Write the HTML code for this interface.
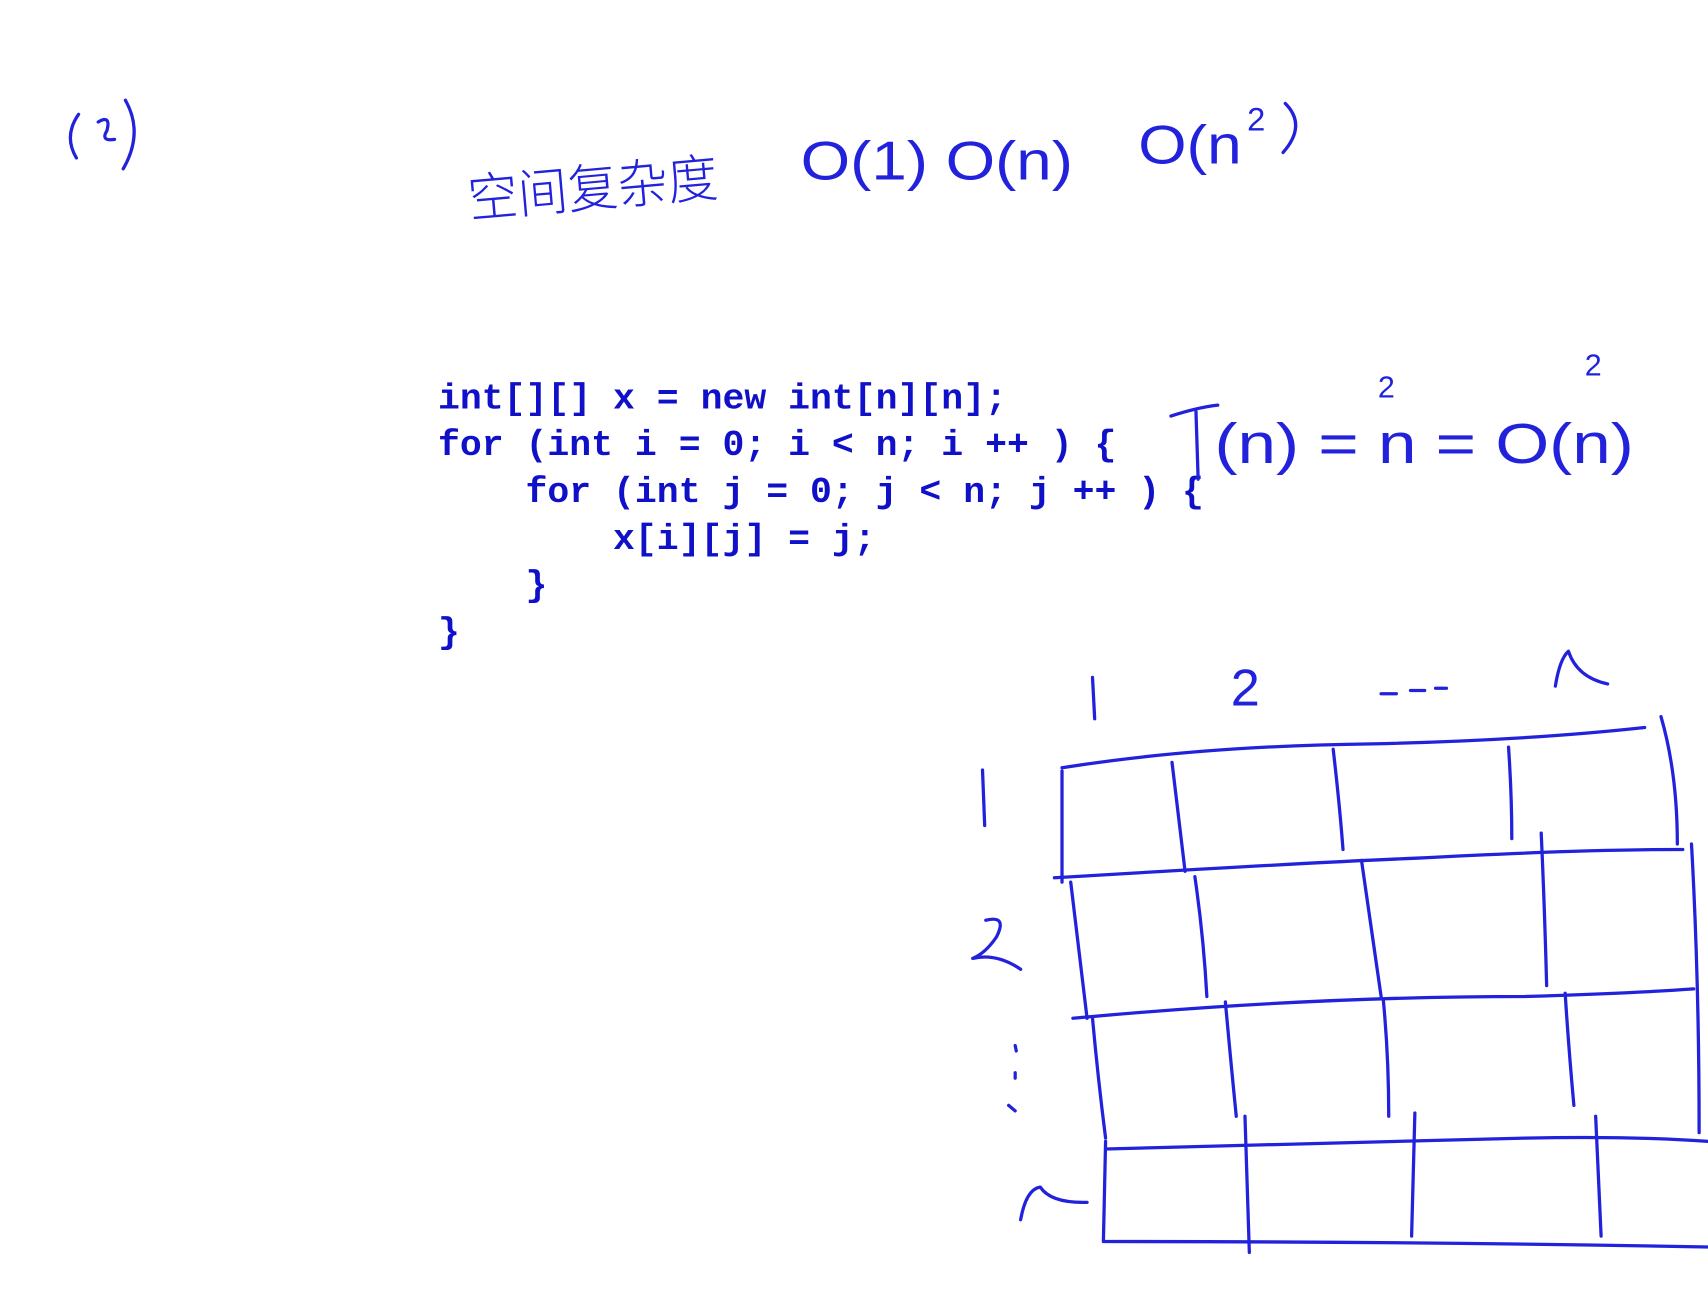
<!DOCTYPE html>
<html><head><meta charset="utf-8"><style>
html,body{margin:0;padding:0;background:#fff;}
svg{display:block;}
.c{font-family:"Liberation Mono","DejaVu Sans Mono",monospace;font-weight:bold;font-size:33.5px;fill:#1010c8;white-space:pre;}
.h{fill:none;stroke:#2222dd;stroke-width:3;stroke-linecap:round;stroke-linejoin:round;}
.t{font-family:"Liberation Sans","Noto Sans CJK SC",sans-serif;fill:#2222dd;}
</style></head><body>
<svg width="1708" height="1296" viewBox="0 0 1568 1190" xmlns="http://www.w3.org/2000/svg">
<rect width="1568" height="1190" fill="#fff"/>
<text class="c" x="402" y="375" xml:space="preserve">int[][] x = new int[n][n];</text>
<text class="c" x="402" y="418" xml:space="preserve">for (int i = 0; i &lt; n; i ++ ) {</text>
<text class="c" x="402" y="461" xml:space="preserve">    for (int j = 0; j &lt; n; j ++ ) {</text>
<text class="c" x="402" y="504" xml:space="preserve">        x[i][j] = j;</text>
<text class="c" x="402" y="547" xml:space="preserve">    }</text>
<text class="c" x="402" y="590" xml:space="preserve">}</text>

<!-- (2) -->
<path class="h" d="M72 105 Q58 125 70 145"/>
<path class="h" d="M90 112 Q102 105 98 120 Q92 130 105 128"/>
<path class="h" d="M115 92 Q132 122 113 155"/>

<!-- chinese heading -->
<text class="t" x="428" y="190" font-size="48" transform="rotate(-5 540 160)" textLength="230" lengthAdjust="spacingAndGlyphs" style="font-family:'Noto Sans CJK SC',sans-serif;font-weight:300">空间复杂度</text>

<!-- O(1) O(n) O(n^2) -->
<text class="t" x="735" y="165" font-size="50" font-weight="300" textLength="250" lengthAdjust="spacingAndGlyphs">O(1) O(n)</text>
<text class="t" x="1045" y="150" font-size="50" font-weight="300" textLength="95" lengthAdjust="spacingAndGlyphs">O(n</text>
<text class="t" x="1145" y="120" font-size="30" font-weight="300">2</text>
<path class="h" d="M1180 95 Q1200 115 1178 140"/>

<!-- T(n) = n^2 = O(n^2) -->
<path class="h" d="M1075 382 Q1100 374 1118 372"/>
<path class="h" d="M1098 378 L1100 440"/>
<text class="t" x="1115" y="425" font-size="52" font-weight="300" textLength="385" lengthAdjust="spacingAndGlyphs">(n) = n = O(n)</text>
<text class="t" x="1265" y="365" font-size="28" font-weight="300">2</text>
<text class="t" x="1455" y="345" font-size="28" font-weight="300">2</text>

<!-- column labels -->
<path class="h" d="M1003 622 L1005 660"/>
<text class="t" x="1130" y="648" font-size="48" font-weight="300">2</text>
<path class="h" d="M1268 637 L1282 637 M1295 634 L1308 634 M1318 632 L1328 632"/>
<path class="h" d="M1428 630 Q1432 605 1440 598 Q1448 622 1476 628"/>

<!-- row labels -->
<path class="h" d="M902 707 L904 758"/>
<path class="h" d="M905 845 Q925 840 915 860 Q905 875 893 880 Q915 875 937 890"/>
<path class="h" d="M932 960 L933 965 M932 985 L932 990 M926 1015 L932 1020"/>
<path class="h" d="M937 1120 Q942 1092 955 1090 Q965 1105 998 1104"/>

<!-- grid -->
<path class="h" d="M975 705 Q1100 685 1260 683 Q1400 680 1510 668"/>
<path class="h" d="M1525 658 Q1540 710 1540 775"/>
<path class="h" d="M975 708 L975 810"/>
<path class="h" d="M968 806 Q1200 792 1300 788 Q1450 780 1545 780"/>
<path class="h" d="M1076 700 Q1083 760 1088 800"/>
<path class="h" d="M1224 688 Q1230 740 1233 780"/>
<path class="h" d="M1385 686 Q1388 730 1388 770"/>
<path class="h" d="M983 810 Q990 870 998 935"/>
<path class="h" d="M1097 805 Q1105 860 1108 915"/>
<path class="h" d="M1250 790 Q1260 860 1268 915"/>
<path class="h" d="M1415 765 Q1418 830 1420 905"/>
<path class="h" d="M1553 775 Q1560 900 1560 1040"/>
<path class="h" d="M985 935 Q1200 915 1400 915 Q1500 912 1555 908"/>
<path class="h" d="M1003 935 Q1008 990 1015 1045"/>
<path class="h" d="M1125 920 Q1130 975 1135 1025"/>
<path class="h" d="M1270 918 Q1275 970 1275 1025"/>
<path class="h" d="M1437 912 Q1440 960 1445 1015"/>
<path class="h" d="M1015 1055 Q1200 1050 1400 1045 Q1500 1043 1568 1048"/>
<path class="h" d="M1015 1048 L1013 1140 Q1300 1140 1568 1145"/>
<path class="h" d="M1143 1025 L1147 1150"/>
<path class="h" d="M1299 1022 L1296 1135"/>
<path class="h" d="M1465 1025 L1470 1135"/>
</svg>
</body></html>
